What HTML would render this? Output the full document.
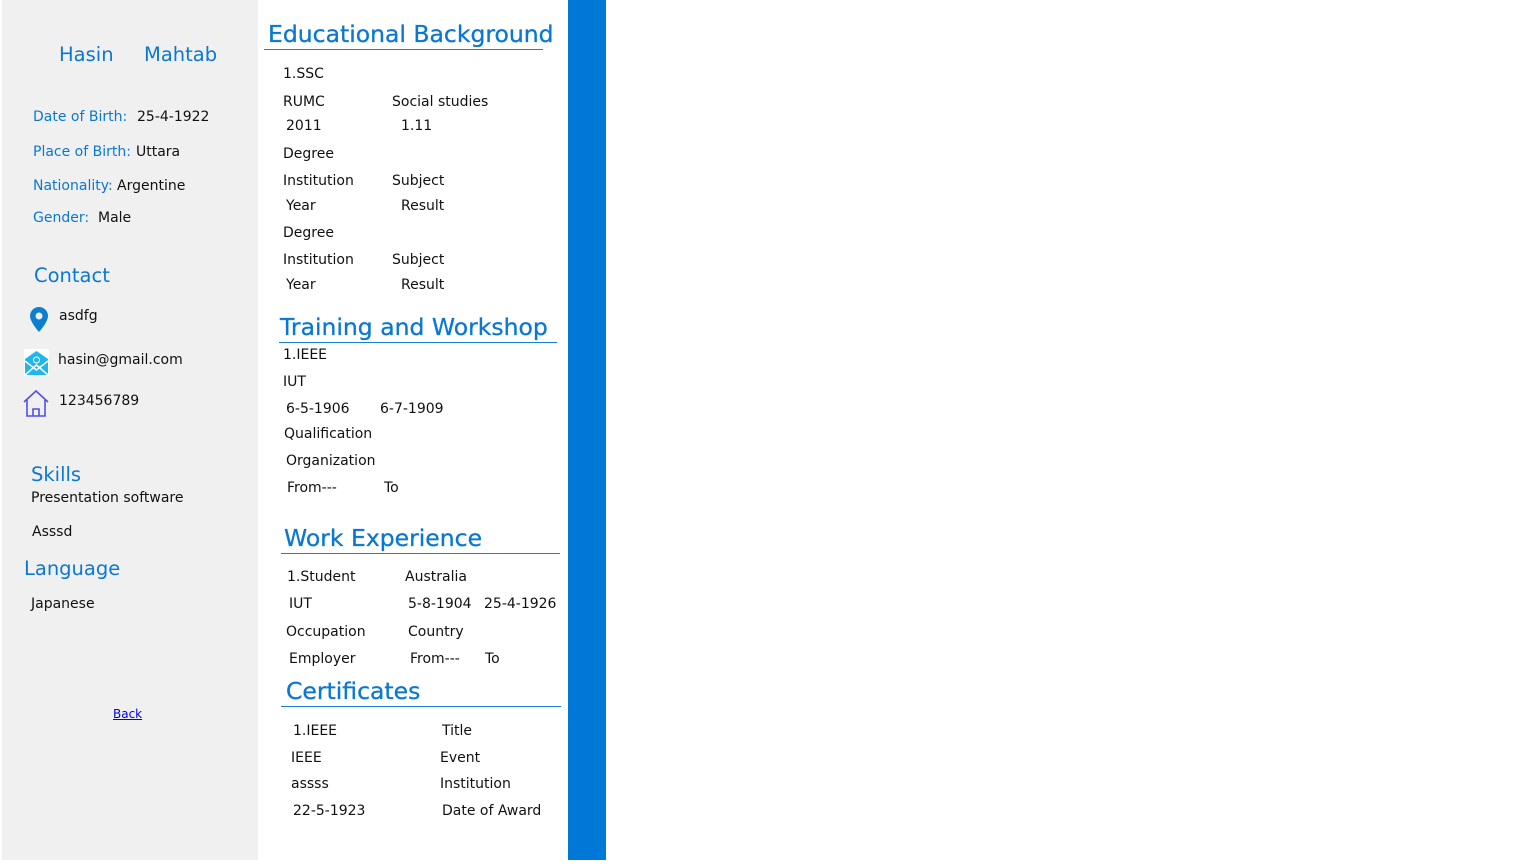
<!DOCTYPE html>
<html><head><meta charset="utf-8"><style>
body{margin:0;width:1536px;height:864px;background:#fff;position:relative;overflow:hidden;font-family:"DejaVu Sans","Liberation Sans",sans-serif;font-size:14px;color:#111}
.t{position:absolute;white-space:nowrap;line-height:18px;margin-top:1px}
.b{color:#0a78d2}
.h{position:absolute;white-space:nowrap;color:#0a78d2;font-size:23.5px;line-height:28px;margin-top:1px;-webkit-text-stroke:0.3px #0a78d2}
.s{position:absolute;white-space:nowrap;color:#0a78d2;font-size:19.5px;line-height:24px;margin-top:1px}
.l{position:absolute;height:1px;background:#1a7fd0}
</style></head><body>
<div style="position:absolute;left:2px;top:0;width:256px;height:860px;background:#f0f0f0"></div>
<div style="position:absolute;left:568px;top:0;width:38px;height:860px;background:#0078d7"></div>

<div class="s" style="left:59px;top:42px">Hasin</div>
<div class="s" style="left:144px;top:42px">Mahtab</div>
<div class="t b" style="left:33px;top:107px">Date of Birth:</div><div class="t" style="left:137px;top:107px">25-4-1922</div>
<div class="t b" style="left:33px;top:142px">Place of Birth:</div><div class="t" style="left:136px;top:142px">Uttara</div>
<div class="t b" style="left:33px;top:176px">Nationality:</div><div class="t" style="left:117px;top:176px">Argentine</div>
<div class="t b" style="left:33px;top:208px">Gender:</div><div class="t" style="left:98px;top:208px">Male</div>
<div class="s" style="left:34px;top:263px">Contact</div>
<svg style="position:absolute;left:29px;top:306px" width="20" height="27" viewBox="0 0 20 27"><path d="M10 1C5 1 1 5 1 10c0 6 9 16 9 16s9-10 9-16c0-5-4-9-9-9z" fill="#0a7fd0"/><circle cx="10" cy="10" r="3.5" fill="#f0f0f0"/></svg>
<div class="t" style="left:59px;top:306px">asdfg</div>
<svg style="position:absolute;left:24px;top:349px" width="25" height="27" viewBox="0 0 25 27"><rect x="0" y="0" width="25" height="27" fill="#fff"/><path d="M1 10L12.5 2 24 10V26H1z" fill="#1fb6f0"/><path d="M1 26L12.5 16 24 26M1 12l11.5 9 11.5-9" stroke="#fff" stroke-width="1.5" fill="none"/><circle cx="12.5" cy="11" r="3" fill="none" stroke="#fff" stroke-width="1"/></svg>
<div class="t" style="left:58px;top:350px">hasin@gmail.com</div>
<svg style="position:absolute;left:23px;top:389px" width="26" height="28" viewBox="0 0 26 28"><path d="M1 13L13 2 25 13M4 11V27H22V11M10 27V20H16V27" stroke="#5050e8" stroke-width="1.6" fill="none"/></svg>
<div class="t" style="left:59px;top:391px">123456789</div>
<div class="s" style="left:31px;top:462px">Skills</div>
<div class="t" style="left:31px;top:488px">Presentation software</div>
<div class="t" style="left:32px;top:522px">Asssd</div>
<div class="s" style="left:24px;top:556px">Language</div>
<div class="t" style="left:31px;top:594px">Japanese</div>
<a style="position:absolute;left:113px;top:706px;font-size:12px;color:#00e;text-decoration:underline;line-height:16px">Back</a>

<div class="h" style="left:268px;top:19px">Educational Background</div>
<div class="l" style="left:264px;top:49px;width:279px"></div>
<div class="t" style="left:283px;top:64px">1.SSC</div>
<div class="t" style="left:283px;top:92px">RUMC</div><div class="t" style="left:392px;top:92px">Social studies</div>
<div class="t" style="left:286px;top:116px">2011</div><div class="t" style="left:401px;top:116px">1.11</div>
<div class="t" style="left:283px;top:144px">Degree</div>
<div class="t" style="left:283px;top:171px">Institution</div><div class="t" style="left:392px;top:171px">Subject</div>
<div class="t" style="left:286px;top:196px">Year</div><div class="t" style="left:401px;top:196px">Result</div>
<div class="t" style="left:283px;top:223px">Degree</div>
<div class="t" style="left:283px;top:250px">Institution</div><div class="t" style="left:392px;top:250px">Subject</div>
<div class="t" style="left:286px;top:275px">Year</div><div class="t" style="left:401px;top:275px">Result</div>

<div class="h" style="left:280px;top:312px">Training and Workshop</div>
<div class="l" style="left:279px;top:342px;width:278px"></div>
<div class="t" style="left:283px;top:345px">1.IEEE</div>
<div class="t" style="left:283px;top:372px">IUT</div>
<div class="t" style="left:286px;top:399px">6-5-1906</div><div class="t" style="left:380px;top:399px">6-7-1909</div>
<div class="t" style="left:284px;top:424px">Qualification</div>
<div class="t" style="left:286px;top:451px">Organization</div>
<div class="t" style="left:287px;top:478px">From---</div><div class="t" style="left:384px;top:478px">To</div>

<div class="h" style="left:284px;top:523px">Work Experience</div>
<div class="l" style="left:281px;top:553px;width:279px"></div>
<div class="t" style="left:287px;top:567px">1.Student</div><div class="t" style="left:405px;top:567px">Australia</div>
<div class="t" style="left:289px;top:594px">IUT</div><div class="t" style="left:408px;top:594px">5-8-1904</div><div class="t" style="left:484px;top:594px">25-4-1926</div>
<div class="t" style="left:286px;top:622px">Occupation</div><div class="t" style="left:408px;top:622px">Country</div>
<div class="t" style="left:289px;top:649px">Employer</div><div class="t" style="left:410px;top:649px">From---</div><div class="t" style="left:485px;top:649px">To</div>

<div class="h" style="left:286px;top:676px">Certificates</div>
<div class="l" style="left:281px;top:706px;width:280px"></div>
<div class="t" style="left:293px;top:721px">1.IEEE</div><div class="t" style="left:442px;top:721px">Title</div>
<div class="t" style="left:291px;top:748px">IEEE</div><div class="t" style="left:440px;top:748px">Event</div>
<div class="t" style="left:291px;top:774px">assss</div><div class="t" style="left:440px;top:774px">Institution</div>
<div class="t" style="left:293px;top:801px">22-5-1923</div><div class="t" style="left:442px;top:801px">Date of Award</div>
</body></html>
